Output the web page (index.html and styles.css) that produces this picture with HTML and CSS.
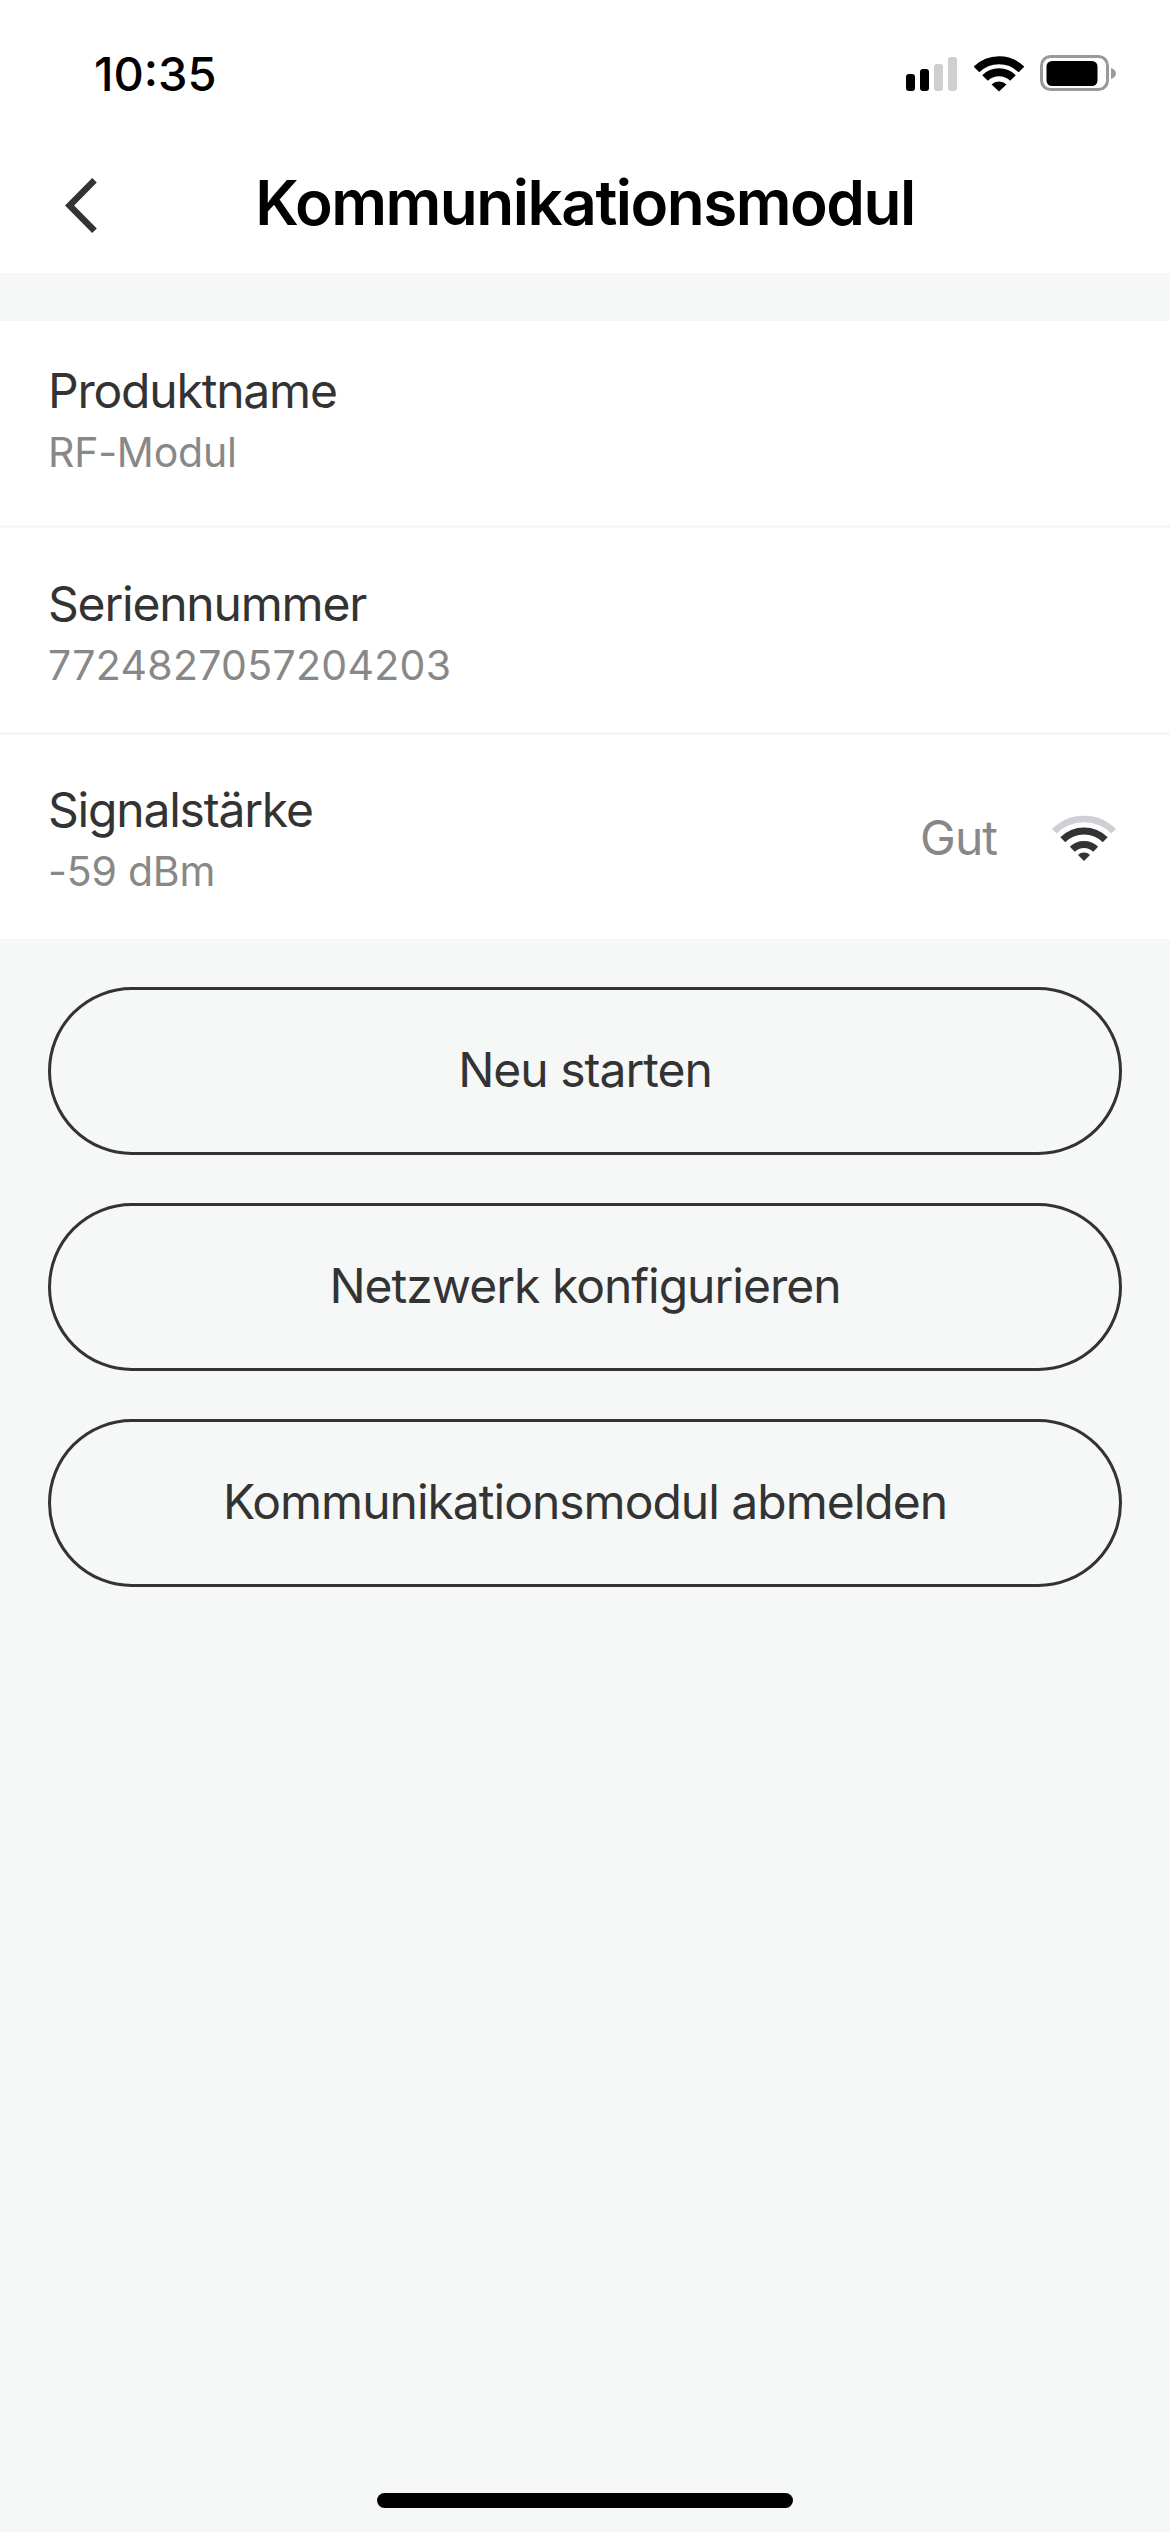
FILE: index.html
```html
<!DOCTYPE html>
<html lang="de">
<head>
<meta charset="utf-8">
<title>Kommunikationsmodul</title>
<link rel="stylesheet" href="styles.css">
</head>
<body>
<div class="screen">
  <header class="top">
    <div class="status">
      <span class="time">10:35</span>
      <div class="status-icons">
        <svg class="cell" width="52" height="34" viewBox="0 0 52 34">
          <rect x="0" y="17" width="9" height="17" rx="3" fill="#000"/>
          <rect x="14" y="12" width="9" height="22" rx="3" fill="#000"/>
          <rect x="28" y="7" width="9" height="27" rx="3" fill="#cfcfcf"/>
          <rect x="42" y="0" width="9" height="34" rx="3" fill="#cfcfcf"/>
        </svg>
        <svg class="wifi" width="50" height="37" viewBox="0 0 50 37">
          <path d="M2.5 14.5A32 32 0 0 1 47.500 14.500" fill="none" stroke="#000" stroke-width="8"/>
          <path d="M11 23A20 20 0 0 1 39 23" fill="none" stroke="#000" stroke-width="8"/>
          <path d="M25 36.500L17.500 29.500A11 11 0 0 1 32.500 29.500Z" fill="#000"/>
        </svg>
        <svg class="battery" width="77" height="37" viewBox="0 0 77 37">
          <rect x="1.500" y="1.500" width="66" height="33" rx="9" fill="none" stroke="#999" stroke-width="3"/>
          <rect x="6.500" y="6" width="51" height="25" rx="5.500" fill="#000"/>
          <path d="M71 13C74 14 76 16 76 18.500C76 21 74 23 71 24Z" fill="#999"/>
        </svg>
      </div>
    </div>
    <div class="nav">
      <svg class="back" width="34" height="58" viewBox="0 0 34 58">
        <path d="M31.500 4.300L6.600 29.500L31.500 54.700" fill="none" stroke="#333" stroke-width="6.500"/>
      </svg>
      <h1 class="title">Kommunikationsmodul</h1>
    </div>
  </header>

  <section class="card">
    <div class="row first">
      <div class="texts">
        <div class="label">Produktname</div>
        <div class="value">RF-Modul</div>
      </div>
    </div>
    <div class="row second">
      <div class="texts">
        <div class="label">Seriennummer</div>
        <div class="value serial">7724827057204203</div>
      </div>
    </div>
    <div class="row last">
      <div class="texts">
        <div class="label">Signalstärke</div>
        <div class="value">-59 dBm</div>
      </div>
      <div class="signal">
        <span class="signal-text">Gut</span>
        <svg class="signal-icon" width="64" height="46" viewBox="0 0 64 46">
          <path d="M2.300 16.300A42 42 0 0 1 61.700 16.300" fill="none" stroke="#cfcfd6" stroke-width="6.500"/>
          <path d="M10.800 24.800A30 30 0 0 1 53.200 24.800" fill="none" stroke="#333" stroke-width="7"/>
          <path d="M20.300 34.300A16.500 16.500 0 0 1 43.700 34.300" fill="none" stroke="#333" stroke-width="7"/>
          <path d="M32 46L26 40A8.500 8.500 0 0 1 38 40Z" fill="#333"/>
        </svg>
      </div>
    </div>
  </section>

  <div class="actions">
    <button class="pill">Neu starten</button>
    <button class="pill">Netzwerk konfigurieren</button>
    <button class="pill">Kommunikationsmodul abmelden</button>
  </div>

  <div class="home-bar"></div>
</div>
</body>
</html>
```
FILE: styles.css
```css
* { box-sizing: border-box; }
html, body { margin: 0; padding: 0; }
body { font-family: Inter, "Liberation Sans", sans-serif; background: #f6f8f7; }
.screen { width: 1170px; height: 2532px; display: flex; flex-direction: column; background: #f6f8f7; overflow: hidden; }
.top { height: 273px; background: #fff; }
.status { height: 146px; padding: 55px 53px 0 94px; display: flex; justify-content: space-between; align-items: flex-start; }
.time { font-size: 47px; font-weight: 500; line-height: 38px; color: #000; }
.status-icons { display: flex; align-items: flex-end; height: 37px; }
.cell { margin-right: 16px; margin-bottom: 1px; }
.wifi { margin-right: 16px; }
.nav { height: 127px; position: relative; display: flex; justify-content: center; padding-top: 19px; }
.back { position: absolute; left: 63px; top: 30px; }
.title { margin: 0; font-size: 62px; font-weight: 600; letter-spacing: -1.5px; color: #000; line-height: 75px; }
.card { margin-top: 48px; background: #fff; display: flex; flex-direction: column; }
.row { display: flex; justify-content: space-between; align-items: flex-start; padding: 0 48px; border-bottom: 3px solid #f6f8f7; }
.row.first { height: 207px; padding-top: 41px; }
.row.second { height: 207px; padding-top: 47px; }
.row.last { height: 204px; padding-top: 46px; border-bottom: 0; }
.label { font-size: 48px; line-height: 58px; letter-spacing: -1.2px; color: #333; }
.value { font-size: 41px; line-height: 58px; margin-top: 3px; letter-spacing: -0.2px; color: #888; }
.value.serial { letter-spacing: 0.3px; }
.signal { display: flex; align-items: center; height: 113px; }
.signal-text { font-size: 48px; letter-spacing: -1px; color: #888; margin-right: 55px; }
.signal-icon { margin-right: 6px; }
.actions { padding: 48px 48px 0; display: flex; flex-direction: column; gap: 48px; }
.pill { height: 168px; border: 3px solid #333; border-radius: 84px; background: transparent; font-family: inherit; font-size: 48px; letter-spacing: -1px; color: #333; padding: 0 0 3px; }
.home-bar { width: 416px; height: 15px; border-radius: 7.5px; background: #000; margin: auto auto 24px; }
```
